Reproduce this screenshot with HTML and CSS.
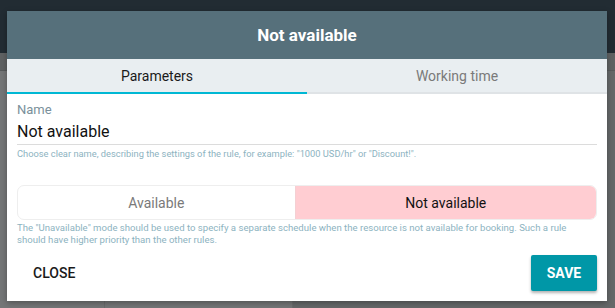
FILE: index.html
```html
<!DOCTYPE html>
<html>
<head>
<meta charset="utf-8">
<link rel="stylesheet" href="styles.css">
</head>
<body>
<div class="page">
  <div class="topbar"></div>
  <div class="backdrop">
    <div class="bg-row1"></div>
    <div class="bg-row2">
      <div class="bg-col a"></div>
      <div class="bg-col b"></div>
      <div class="bg-col c"></div>
    </div>
  </div>
  <div class="dialog">
    <div class="dlg-head">Not available</div>
    <div class="tabs">
      <div class="tab active">Parameters</div>
      <div class="tab">Working time</div>
    </div>
    <div class="body">
      <div class="field">
        <label class="label">Name</label>
        <div class="input">Not available</div>
        <div class="hint">Choose clear name, describing the settings of the rule, for example: "1000 USD/hr" or "Discount!".</div>
      </div>
      <div class="toggle">
        <div class="opt left">Available</div>
        <div class="opt right on">Not available</div>
      </div>
      <div class="desc">The "Unavailable" mode should be used to specify a separate schedule when the resource is not available for booking. Such a rule should have higher priority than the other rules.</div>
    </div>
    <div class="actions">
      <button class="btn close">CLOSE</button>
      <button class="btn save">SAVE</button>
    </div>
  </div>
</div>
</body>
</html>
```
FILE: styles.css
```css
html, body { margin: 0; padding: 0; }
body {
  width: 615px; height: 308px; overflow: hidden;
  font-family: Roboto, "Noto Sans", sans-serif;
  background: #656869;
}
.page { position: relative; width: 615px; height: 308px; }
.topbar { height: 53px; background: #222c33; }
.backdrop { display: flex; flex-direction: column; height: 255px; }
.bg-row1 { height: 17px; background: #5f6263; border-bottom: 1px solid #575a5b; }
.bg-row2 { flex: 1; display: flex; background: #747677; }
.bg-col { height: 100%; }
.bg-col.a { width: 104px; border-right: 1px solid #6a6c6d; }
.bg-col.b { width: 187px; border-right: 1px solid #6a6c6d; }
.bg-col.c { flex: 1; background: #656869; }

.dialog {
  position: absolute; left: 7px; top: 11px; width: 600px; height: 290px;
  background: #fff; display: flex; flex-direction: column;
  box-shadow: 0 2px 6px rgba(0,0,0,0.3);
}
.dlg-head {
  height: 48px; background: #56707b; color: #fff;
  display: flex; align-items: center; justify-content: center;
  font-size: 17px; font-weight: 700;
}
.tabs {
  display: flex; height: 33px; background: #e9eef1;
  border-bottom: 2px solid #dfe3e6;
}
.tab {
  flex: 1; display: flex; align-items: center; justify-content: center;
  font-size: 14px; color: #7a7a7a; margin-bottom: -2px;
  border-bottom: 2px solid transparent;
}
.tab.active { color: #1a1a1a; border-bottom-color: #00b8d4; }
.body { padding: 8px 10px 0 10px; flex: 1; }
.field { display: flex; flex-direction: column; }
.label { font-size: 13px; color: #7a909b; line-height: 15px; margin-bottom: 4px; }
.input {
  font-size: 16px; color: #111; line-height: 22px;
  padding-bottom: 1px; border-bottom: 1px solid #dcdcdc;
}
.hint { font-size: 9.3px; color: #8db3bf; line-height: 12px; margin-top: 3px; }
.toggle {
  display: flex; margin-top: 25px; height: 33px;
  border: 1px solid #eeeeee; border-radius: 7px; overflow: hidden;
}
.opt {
  display: flex; align-items: center; justify-content: center;
  font-size: 14px; color: #7a7a7a;
}
.opt.left { flex: 278; }
.opt.right { flex: 302; }
.opt.on { background: #ffcdd2; color: #111; border-left: 1px solid #f4d0d3; }
.desc { font-size: 9.6px; color: #8db3bf; line-height: 12px; margin-top: 2px; }
.actions {
  display: flex; justify-content: space-between; align-items: center;
  padding: 0 10px 10px 10px; height: 36px;
}
.btn {
  font-family: Roboto, sans-serif; font-size: 14px; border: 0;
  height: 36px; padding: 0 16px; border-radius: 2px; cursor: pointer;
}
.btn.close { background: transparent; color: #1a1a1a; font-weight: 500; }
.btn.save {
  background: #0097a7; color: #fff; font-weight: 700; width: 66px; padding: 0;
  box-shadow: 0 2px 3px rgba(0,0,0,0.3);
}
```
